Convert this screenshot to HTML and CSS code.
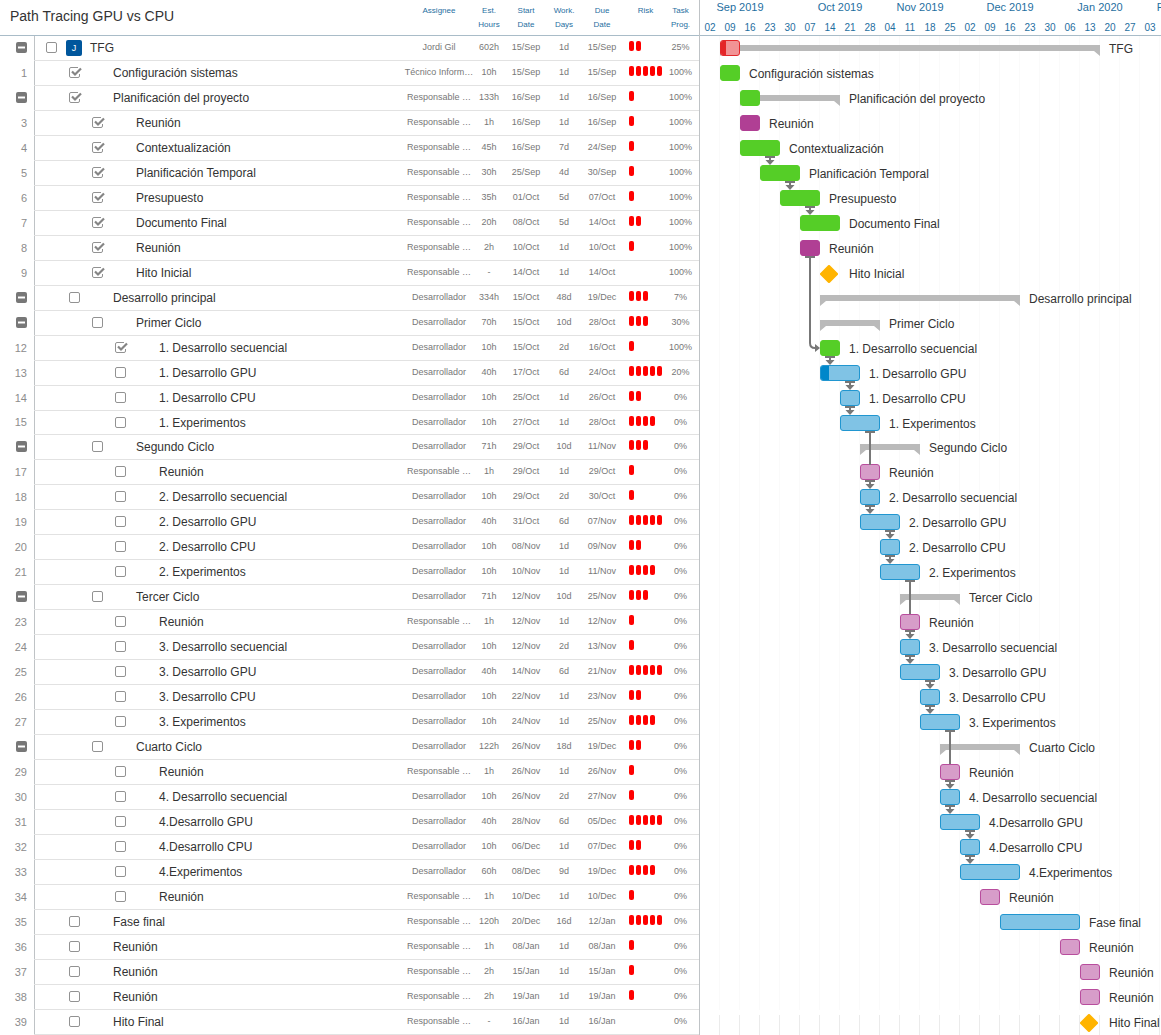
FILE: index.html
```html
<!DOCTYPE html>
<html lang="es">
<head>
  <meta charset="utf-8">
  <meta name="viewport" content="width=device-width, initial-scale=1">
  <title>Path Tracing GPU vs CPU</title>
  <link rel="stylesheet" href="styles.css">
</head>
<body>
  <main class="planner">
    <section class="grid-pane">
      <table class="tasks">
        <colgroup>
          <col class="col-index">
          <col class="col-name">
          <col class="col-assignee">
          <col class="col-hours">
          <col class="col-date">
          <col class="col-days">
          <col class="col-date">
          <col class="col-risk">
          <col class="col-progress">
        </colgroup>
        <thead>
          <tr>
            <th class="title" colspan="2"><h1>Path Tracing GPU vs CPU</h1></th>
            <th>Assignee</th>
            <th>Est.<br>Hours</th>
            <th>Start<br>Date</th>
            <th>Work.<br>Days</th>
            <th>Due<br>Date</th>
            <th class="risk-head">Risk</th>
            <th>Task<br>Prog.</th>
          </tr>
        </thead>
        <tbody id="task-rows"></tbody>
      </table>
    </section>
    <section class="chart-pane" aria-label="Gantt">
      <header class="timescale">
        <div class="months" id="months"></div>
        <div class="weeks" id="weeks"></div>
      </header>
      <div class="chart" id="chart"></div>
    </section>
  </main>
  <script src="script.js"></script>
</body>
</html>
```

FILE: styles.css
```css
* {
  box-sizing: border-box;
}

body {
  margin: 0;
  background: #fff;
  color: #333;
  font-family: "Liberation Sans", Arial, sans-serif;
  font-size: 12px;
}

.planner {
  display: flex;
  min-height: 100vh;
  overflow: hidden;
}

.grid-pane {
  flex: 0 0 700px;
  border-right: 1px solid #bfc3c6;
}

.chart-pane {
  flex: 1;
  min-width: 0;
  overflow: hidden;
  display: flex;
  flex-direction: column;
}

/* Task table */

.tasks {
  width: 100%;
  table-layout: fixed;
  border-collapse: separate;
  border-spacing: 0;
}

.col-index { width: 35px; }
.col-assignee { width: 70px; }
.col-hours { width: 30px; }
.col-date { width: 44px; }
.col-days { width: 32px; }
.col-risk { width: 38px; }
.col-progress { width: 37px; }

.tasks th {
  height: 36px;
  padding: 4px 0 0;
  border-bottom: 1px solid #a9bcc8;
  color: #1f6f9f;
  font-size: 8px;
  font-weight: 400;
  line-height: 14px;
  text-align: center;
  vertical-align: top;
}

.tasks .title {
  padding: 8px 0 0 10px;
  color: #333;
  text-align: left;
}

.tasks .risk-head {
  padding-left: 5px;
}

.title h1 {
  margin: 0;
  font-size: 14px;
  font-weight: 400;
  line-height: 16px;
}

.tasks td {
  height: 25px;
  padding: 0;
  border-bottom: 1px solid #e2e2e2;
  color: #777;
  font-size: 9px;
  line-height: 22px;
  text-align: center;
  vertical-align: top;
  white-space: nowrap;
}

.tasks .short td {
  height: 24px;
}

.tasks .index {
  padding-right: 7px;
  border-right: 1px solid #bfc3c6;
  border-bottom-color: transparent;
  color: #8c8c8c;
  font-size: 11px;
  line-height: 24px;
  text-align: right;
}

.tasks .short .index {
  line-height: 23px;
}

.collapse {
  display: block;
  width: 11px;
  height: 11px;
  margin: 6px 0 0 auto;
  padding: 0;
  border: 0;
  background: none;
}

.collapse svg {
  display: block;
}

.task {
  display: flex;
  align-items: center;
  height: 24px;
  color: #333;
  font-size: 12px;
}

.short .task {
  height: 23px;
}

.level-0 { padding-left: 11px; }
.level-1 { padding-left: 34px; }
.level-2 { padding-left: 57px; }
.level-3 { padding-left: 80px; }

.task input {
  appearance: none;
  flex: none;
  width: 13px;
  height: 12px;
  margin: 0 31px 0 0;
  background: url("data:image/svg+xml,%3Csvg xmlns='http://www.w3.org/2000/svg' width='13' height='12'%3E%3Crect x='.5' y='.5' width='10' height='10' rx='1.5' fill='none' stroke='%23929292'/%3E%3C/svg%3E") no-repeat;
}

.task input:checked {
  background-image: url("data:image/svg+xml,%3Csvg xmlns='http://www.w3.org/2000/svg' width='13' height='12'%3E%3Cpath d='M10.5 7v2a1.500 1.500 0 0 1-1.500 1.500H2A1.500 1.500 0 0 1 .5 9V2A1.500 1.500 0 0 1 2 .5h7' fill='none' stroke='%23929292'/%3E%3Cpath d='M3 4.500l3 3 6-6' fill='none' stroke='%23858585' stroke-width='2.200'/%3E%3C/svg%3E");
}

.task .with-avatar {
  margin-right: 7px;
}

.avatar {
  width: 16px;
  height: 16px;
  margin-right: 8px;
  border-radius: 2px;
  background: #00569c;
  color: #fff;
  font-size: 9px;
  line-height: 16px;
  text-align: center;
}

.risk {
  display: flex;
  gap: 2px;
  padding: 5px 0 0 5px;
}

.risk span {
  flex: none;
  width: 5px;
  height: 10px;
  border-radius: 2px;
  background: #f00;
}

/* Time scale */

.timescale {
  flex: none;
  height: 36px;
  border-bottom: 1px solid #a9bcc8;
  color: #1f6f9f;
  white-space: nowrap;
}

.months,
.weeks {
  display: grid;
  grid-auto-columns: 20px;
  grid-auto-flow: column;
  text-align: center;
}

.months {
  height: 18px;
  font-size: 11px;
  line-height: 14px;
}

.months span {
  display: flex;
  justify-content: center;
}

.weeks {
  font-size: 10px;
  line-height: 19px;
}

/* Bars */

.chart {
  flex: 1;
  background: repeating-linear-gradient(to right, transparent 0 19px, #fafafa 19px 20px);
}

.lane {
  display: grid;
  grid-auto-columns: 20px;
  height: 25px;
}

.lane.short {
  height: 24px;
}

.lane:last-child {
  background: linear-gradient(#fff, #fff) 0 0 / 100% 5px no-repeat, repeating-linear-gradient(to right, transparent 0 19px, #ebebeb 19px 20px);
}

.lane > * {
  grid-row: 1;
}

.bar {
  position: relative;
  z-index: 1;
  height: 16px;
  margin-top: 4px;
  border: 1px solid;
  border-radius: 3px;
  overflow: hidden;
}

.fill {
  height: 100%;
}

.green { background: #55ce27; border-color: #55ce27; }
.purple { background: #b03f94; border-color: #b03f94; }
.pink { background: #d79dc9; border-color: #b84d9d; }
.blue { background: #80c3e5; border-color: #2196d0; }
.blue .fill { background: #0087ca; }
.red { background: #f19395; border-color: #e2292c; }
.red .fill { background: #e42528; }

.summary {
  height: 11px;
  margin-top: 9px;
  background: #bababa;
  clip-path: polygon(0 0, 100% 0, 100% 100%, calc(100% - 6px) 6px, 6px 6px, 0 100%);
}

.milestone {
  display: block;
  width: 18px;
  height: 18px;
  margin-top: 4px;
}

.label {
  padding-left: 9px;
  color: #333;
  line-height: 26px;
  white-space: nowrap;
}

.link {
  position: relative;
  z-index: 2;
  justify-self: center;
  width: 10px;
  height: 0;
  margin-top: 20px;
}

.link svg {
  position: absolute;
  top: 0;
  left: 0;
}
```

FILE: script.js
```js
const R = "Responsable …";
const D = "Desarrollador";

// level, done, name, assignee, hours, start, days, due, risk, progress,
// bar kind, first week column, column span, link to a later row
const tasks = [
  [0, 0, "TFG", "Jordi Gil", "602h", "15/Sep", "1d", "15/Sep", 2, 25, "summary", 1, 19],
  [1, 1, "Configuración sistemas", "Técnico Inform…", "10h", "15/Sep", "1d", "15/Sep", 5, 100, "green", 1, 1],
  [1, 1, "Planificación del proyecto", R, "133h", "16/Sep", "1d", "16/Sep", 1, 100, "summary", 2, 5],
  [2, 1, "Reunión", R, "1h", "16/Sep", "1d", "16/Sep", 1, 100, "purple", 2, 1],
  [2, 1, "Contextualización", R, "45h", "16/Sep", "7d", "24/Sep", 1, 100, "green", 2, 2, "next"],
  [2, 1, "Planificación Temporal", R, "30h", "25/Sep", "4d", "30/Sep", 1, 100, "green", 3, 2, "next"],
  [2, 1, "Presupuesto", R, "35h", "01/Oct", "5d", "07/Oct", 1, 100, "green", 4, 2, "next"],
  [2, 1, "Documento Final", R, "20h", "08/Oct", "5d", "14/Oct", 2, 100, "green", 5, 2],
  [2, 1, "Reunión", R, "2h", "10/Oct", "1d", "10/Oct", 1, 100, "purple", 5, 1, "elbow"],
  [2, 1, "Hito Inicial", R, "-", "14/Oct", "1d", "14/Oct", 0, 100, "milestone", 6, 1],
  [1, 0, "Desarrollo principal", D, "334h", "15/Oct", "48d", "19/Dec", 3, 7, "summary", 6, 10],
  [2, 0, "Primer Ciclo", D, "70h", "15/Oct", "10d", "28/Oct", 3, 30, "summary", 6, 3],
  [3, 1, "1. Desarrollo secuencial", D, "10h", "15/Oct", "2d", "16/Oct", 1, 100, "green", 6, 1, "next"],
  [3, 0, "1. Desarrollo GPU", D, "40h", "17/Oct", "6d", "24/Oct", 5, 20, "blue", 6, 2, "next"],
  [3, 0, "1. Desarrollo CPU", D, "10h", "25/Oct", "1d", "26/Oct", 2, 0, "blue", 7, 1, "next"],
  [3, 0, "1. Experimentos", D, "10h", "27/Oct", "1d", "28/Oct", 4, 0, "blue", 7, 2, "long"],
  [2, 0, "Segundo Ciclo", D, "71h", "29/Oct", "10d", "11/Nov", 3, 0, "summary", 8, 3],
  [3, 0, "Reunión", R, "1h", "29/Oct", "1d", "29/Oct", 1, 0, "pink", 8, 1, "next"],
  [3, 0, "2. Desarrollo secuencial", D, "10h", "29/Oct", "2d", "30/Oct", 1, 0, "blue", 8, 1, "next"],
  [3, 0, "2. Desarrollo GPU", D, "40h", "31/Oct", "6d", "07/Nov", 5, 0, "blue", 8, 2, "next"],
  [3, 0, "2. Desarrollo CPU", D, "10h", "08/Nov", "1d", "09/Nov", 2, 0, "blue", 9, 1, "next"],
  [3, 0, "2. Experimentos", D, "10h", "10/Nov", "1d", "11/Nov", 4, 0, "blue", 9, 2, "long"],
  [2, 0, "Tercer Ciclo", D, "71h", "12/Nov", "10d", "25/Nov", 3, 0, "summary", 10, 3],
  [3, 0, "Reunión", R, "1h", "12/Nov", "1d", "12/Nov", 1, 0, "pink", 10, 1, "next"],
  [3, 0, "3. Desarrollo secuencial", D, "10h", "12/Nov", "2d", "13/Nov", 1, 0, "blue", 10, 1, "next"],
  [3, 0, "3. Desarrollo GPU", D, "40h", "14/Nov", "6d", "21/Nov", 5, 0, "blue", 10, 2, "next"],
  [3, 0, "3. Desarrollo CPU", D, "10h", "22/Nov", "1d", "23/Nov", 2, 0, "blue", 11, 1, "next"],
  [3, 0, "3. Experimentos", D, "10h", "24/Nov", "1d", "25/Nov", 4, 0, "blue", 11, 2, "long"],
  [2, 0, "Cuarto Ciclo", D, "122h", "26/Nov", "18d", "19/Dec", 2, 0, "summary", 12, 4],
  [3, 0, "Reunión", R, "1h", "26/Nov", "1d", "26/Nov", 1, 0, "pink", 12, 1, "next"],
  [3, 0, "4. Desarrollo secuencial", D, "10h", "26/Nov", "2d", "27/Nov", 1, 0, "blue", 12, 1, "next"],
  [3, 0, "4.Desarrollo GPU", D, "40h", "28/Nov", "6d", "05/Dec", 5, 0, "blue", 12, 2, "next"],
  [3, 0, "4.Desarrollo CPU", D, "10h", "06/Dec", "1d", "07/Dec", 2, 0, "blue", 13, 1, "next"],
  [3, 0, "4.Experimentos", D, "60h", "08/Dec", "9d", "19/Dec", 4, 0, "blue", 13, 3],
  [3, 0, "Reunión", R, "1h", "10/Dec", "1d", "10/Dec", 1, 0, "pink", 14, 1],
  [1, 0, "Fase final", R, "120h", "20/Dec", "16d", "12/Jan", 5, 0, "blue", 15, 4],
  [1, 0, "Reunión", R, "1h", "08/Jan", "1d", "08/Jan", 1, 0, "pink", 18, 1],
  [1, 0, "Reunión", R, "2h", "15/Jan", "1d", "15/Jan", 1, 0, "pink", 19, 1],
  [1, 0, "Reunión", R, "2h", "19/Jan", "1d", "19/Jan", 1, 0, "pink", 19, 1],
  [1, 0, "Hito Final", R, "-", "16/Jan", "1d", "16/Jan", 0, 0, "milestone", 19, 1],
];

const months = [["Sep 2019", 0, 4], ["Oct 2019", 5, 4], ["Nov 2019", 9, 4], ["Dec 2019", 13, 5], ["Jan 2020", 18, 4], ["Feb 2020", 22, 4]];
const weeks = "02 09 16 23 30 07 14 21 28 04 11 18 25 02 09 16 23 30 06 13 20 27 03".split(" ");

const minusIcon = `<svg width="11" height="11" viewBox="0 0 11 11"><rect width="11" height="11" rx="2" fill="#777"/><path d="M2 5.500h7" stroke="#fff" stroke-width="2"/></svg>`;
const diamond = `<svg class="milestone" viewBox="0 0 18 18"><path d="M9 1.500 16.500 9 9 16.500 1.500 9Z" fill="#ffb400" stroke="#ffb400" stroke-width="3" stroke-linejoin="round"/></svg>`;

const links = {
  next: `<svg width="10" height="9"><path d="M0 1h10M5 1v5" stroke="#777" stroke-width="2"/><path d="M.5 4h9L5 9Z" fill="#777"/></svg>`,
  long: `<svg width="10" height="34"><path d="M0 1h10M5 1v33" stroke="#777" stroke-width="2"/></svg>`,
  elbow: `<svg width="16" height="98"><path d="M0 1h10M5 1v86q0 5 5 5h2" fill="none" stroke="#777" stroke-width="2"/><path d="M10 88v8l5-4Z" fill="#777"/></svg>`,
};

const isShort = (i) => (i === 15 ? "short" : "");

const row = ([level, done, name, who, hours, start, days, due, risk, progress, kind], i) => `
  <tr class="${isShort(i)}">
    <td class="index">${kind === "summary" ? `<button class="collapse" aria-label="Contraer ${name}">${minusIcon}</button>` : i}</td>
    <td><label class="task level-${level}"><input type="checkbox" class="${i ? "" : "with-avatar"}" ${done ? "checked" : ""}>${i ? "" : `<span class="avatar">J</span>`}<span>${name}</span></label></td>
    <td>${who}</td><td>${hours}</td><td>${start}</td><td>${days}</td><td>${due}</td>
    <td><div class="risk">${"<span></span>".repeat(risk)}</div></td>
    <td>${progress}%</td>
  </tr>`;

const at = (col, span) => `style="grid-column:${col + 1} / span ${span}"`;

const bar = (kind, col, span, progress) =>
  `<div class="bar ${kind}" ${at(col, span)}>${progress > 0 && progress < 100 ? `<div class="fill" style="width:${progress}%"></div>` : ""}</div>`;

const lane = (t, i) => {
  const [kind, col, span, link] = t.slice(10);
  let shape;
  if (kind === "summary") {
    shape = `<div class="summary" ${at(col, span)}></div>`;
    if (i === 0) shape += bar("red", col, 1, 30);
    if (i === 2) shape += bar("green", col, 1, 100);
  } else if (kind === "milestone") {
    shape = `<div ${at(col, span)}>${diamond}</div>`;
  } else {
    shape = bar(kind, col, span, t[9]);
  }
  const arrow = link ? `<div class="link" ${at(col + span - 1, 1)}>${links[link]}</div>` : "";
  return `<div class="lane ${isShort(i)}">${shape}${arrow}<span class="label" ${at(col + span, 1)}>${t[2]}</span></div>`;
};

document.getElementById("task-rows").innerHTML = tasks.map(row).join("");
document.getElementById("chart").innerHTML = tasks.map(lane).join("");
document.getElementById("months").innerHTML = months.map(([m, c, s]) => `<span ${at(c, s)}>${m}</span>`).join("");
document.getElementById("weeks").innerHTML = weeks.map((w) => `<span>${w}</span>`).join("");
```
